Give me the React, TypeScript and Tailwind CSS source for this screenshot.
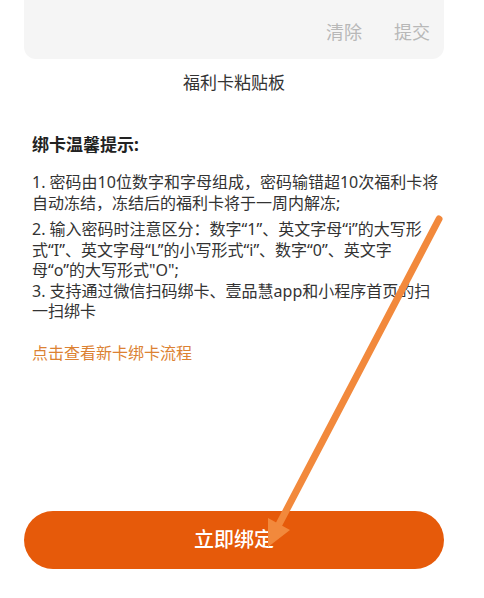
import React from "react";

export default function App() {
  const font = { fontFamily: '"Noto Sans", "Noto Sans CJK SC", sans-serif' };
  return (
    <div className="relative w-[484px] h-[598px] bg-white overflow-hidden" style={font}>
      <div className="ml-6 w-[420px]">
        <div className="h-[59px] bg-[#f5f5f5] rounded-b-[12px] flex justify-end items-start pt-[19px] pr-[14px] gap-8 text-[18px] leading-[26px] text-[#b8b8b8]">
          <span>清除</span>
          <span>提交</span>
        </div>
        <div className="text-center text-[17px] leading-[24px] text-[#333] mt-[12px]">福利卡粘贴板</div>
        <div className="pl-2 mt-[38px] text-[#333] whitespace-nowrap">
          <div className="text-[17px] leading-[24px] font-bold text-[#222]">绑卡温馨提示:</div>
          <div className="mt-[15px] text-[16px] leading-[20.5px]">
            1. 密码由10位数字和字母组成，密码输错超10次福利卡将<br />自动冻结，冻结后的福利卡将于一周内解冻;
          </div>
          <div className="mt-[6px] text-[16px] leading-[20.5px]">
            2. 输入密码时注意区分：数字“1”、英文字母“i”的大写形<br />式“I”、英文字母“L”的小写形式“i”、数字“0”、英文字<br />母“o”的大写形式"O";
          </div>
          <div className="text-[16px] leading-[20.5px]">
            3. 支持通过微信扫码绑卡、壹品慧app和小程序首页的扫<br />一扫绑卡
          </div>
          <div className="mt-[21px] text-[16px] leading-[20.5px] text-[#dc8233]">点击查看新卡绑卡流程</div>
        </div>
      </div>
      <div className="absolute left-6 top-[511px] h-[58px] w-[420px] rounded-full bg-[#e65a0a] flex items-center justify-center text-white text-[20px] font-medium">
        立即绑定
      </div>
      <svg className="absolute inset-0 pointer-events-none" width="484" height="598" viewBox="0 0 484 598">
        <line x1="439" y1="219" x2="276" y2="530" stroke="#f2893c" strokeWidth="7" strokeLinecap="round" />
        <polygon points="268,547 290,530 268,518" fill="#f2893c" />
      </svg>
    </div>
  );
}
